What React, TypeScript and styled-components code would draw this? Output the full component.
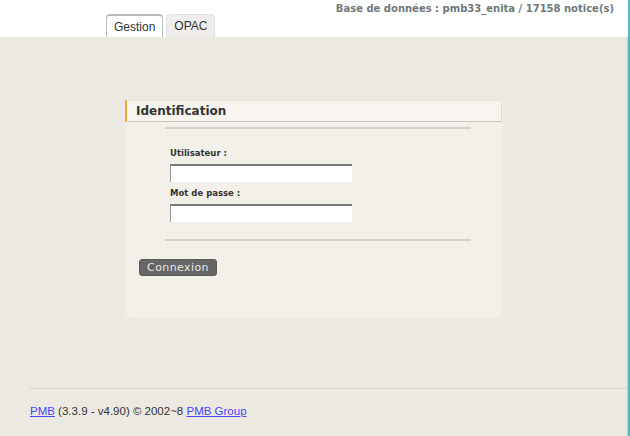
import React from "react";
import styled, { createGlobalStyle } from "styled-components";

const Global = createGlobalStyle`
  html, body { margin: 0; padding: 0; }
  body {
    background: #ece9e3;
    font-family: "Liberation Sans", Arial, sans-serif;
    width: 630px;
    height: 436px;
    overflow: hidden;
  }
`;

const Page = styled.div`
  position: relative;
  width: 630px;
  height: 436px;
  display: flex;
  flex-direction: column;
  box-sizing: border-box;
  border-right: 2px solid #5cb6c9;
`;

const EdgeLine = styled.div`
  position: absolute;
  top: 0;
  right: 0;
  width: 1px;
  height: 436px;
  background: #c8c8c8;
`;

const Header = styled.div`
  height: 37px;
  background: #ffffff;
  position: relative;
  display: flex;
  align-items: flex-end;
  padding-left: 106px;
  box-sizing: border-box;
`;

const DbInfo = styled.div`
  position: absolute;
  top: 3px;
  right: 14px;
  font-family: "DejaVu Sans", sans-serif;
  font-weight: bold;
  font-size: 10px;
  color: #6f777b;
`;

const Tabs = styled.div`
  display: flex;
  gap: 3px;
`;

const Tab = styled.div<{ $active?: boolean }>`
  height: 23px;
  box-sizing: border-box;
  padding: 0 7px;
  display: flex;
  align-items: center;
  font-size: 12px;
  color: #333;
  border: 1px solid ${(p) => (p.$active ? "#bdbdbd" : "#e2e2e2")};
  border-bottom: none;
  border-radius: 4px 4px 0 0;
  background: ${(p) => (p.$active ? "#ffffff" : "#efeeec")};
  ${(p) => (p.$active ? "border-top: 2px solid #b8b8b8;" : "")}
`;

const Main = styled.div`
  flex: 1;
  display: flex;
  flex-direction: column;
  padding-top: 63px;
  padding-left: 125px;
`;

const Panel = styled.div`
  width: 378px;
  height: 218px;
  background: #f3f0ea;
  border-radius: 0 0 9px 9px;
  display: flex;
  flex-direction: column;
`;

const PanelTitle = styled.div`
  height: 22px;
  box-sizing: border-box;
  width: 377px;
  background: #f7f4ef;
  border-left: 2px solid #f2a531;
  border-bottom: 1px solid #c9c7c3;
  border-right: 1px solid #dedbd5;
  border-top: 1px solid #e6e3dd;
  display: flex;
  align-items: center;
  padding-left: 9px;
  font-family: "DejaVu Sans", sans-serif;
  font-weight: bold;
  font-size: 12px;
  color: #333;
`;

const Rule = styled.div<{ $top: number }>`
  margin: ${(p) => p.$top}px 0 0 40px;
  width: 306px;
  height: 2px;
  background: #d2d0cb;
`;

const Form = styled.div`
  padding: 18px 0 0 45px;
  display: flex;
  flex-direction: column;
`;

const Label = styled.div<{ $top: number }>`
  margin-top: ${(p) => p.$top}px;
  font-family: "DejaVu Sans", sans-serif;
  font-weight: bold;
  font-size: 8.5px;
  color: #333;
  height: 12px;
  line-height: 12px;
`;

const Input = styled.input`
  margin: 0;
  margin-top: 5px;
  width: 182px;
  height: 18px;
  box-sizing: border-box;
  background: #fff;
  border: none;
  border-top: 2px solid #7a7a7a;
  border-left: 1px solid #9a9a9a;
  padding: 0;
  outline: none;
`;

const Button = styled.button`
  margin: 18px 0 0 14px;
  width: 78px;
  height: 17px;
  padding: 0;
  background: #666;
  color: #e6e6e6;
  border: 1px solid #5a5a5a;
  border-radius: 3px;
  font-family: "DejaVu Sans", sans-serif;
  font-size: 11px;
  letter-spacing: 0.4px;
  line-height: 15px;
  align-self: flex-start;
`;

const Footer = styled.div`
  margin-top: auto;
  margin-left: 30px;
  border-top: 1px solid #d8d4c8;
  height: 48px;
  padding-top: 16px;
  box-sizing: border-box;
  font-size: 11.5px;
  color: #333;
`;

const Link = styled.a`
  color: #4646f8;
  text-decoration: underline;
`;

export default function App() {
  return (
    <>
      <Global />
      <Page>
        <EdgeLine />
        <Header>
          <DbInfo>Base de données : pmb33_enita / 17158 notice(s)</DbInfo>
          <Tabs>
            <Tab $active>Gestion</Tab>
            <Tab>OPAC</Tab>
          </Tabs>
        </Header>
        <Main>
          <Panel>
            <PanelTitle>Identification</PanelTitle>
            <Rule $top={5} />
            <Form>
              <Label $top={0}>Utilisateur :</Label>
              <Input type="text" />
              <Label $top={5}>Mot de passe :</Label>
              <Input type="password" />
            </Form>
            <Rule $top={17} />
            <Button>Connexion</Button>
          </Panel>
        </Main>
        <Footer>
          <Link href="#">PMB</Link> (3.3.9 - v4.90) © 2002~8 <Link href="#">PMB Group</Link>
        </Footer>
      </Page>
    </>
  );
}
